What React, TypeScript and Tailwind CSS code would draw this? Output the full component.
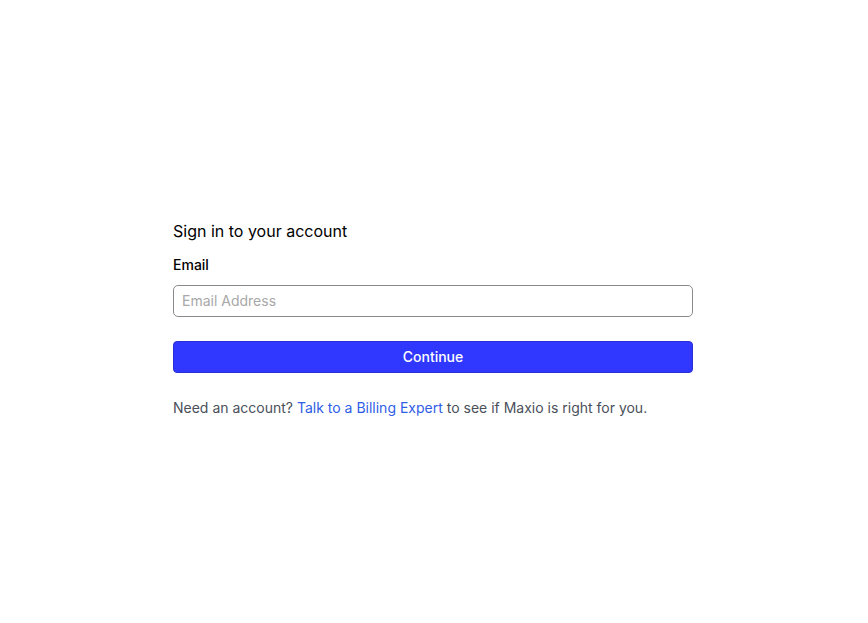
export default function App() {
  return (
    <div className="min-h-screen bg-white font-['Inter',sans-serif]">
      <div className="ml-[173px] w-[520px] pt-[219px]">
        <h1 className="text-base leading-6 font-normal text-black">Sign in to your account</h1>
        <label className="mt-3 block text-sm leading-5 font-medium text-black">Email</label>
        <input
          type="email"
          placeholder="Email Address"
          className="mt-[10px] block h-8 w-full rounded-[5px] border border-[#8a8a8a] px-2 pb-px text-sm text-black placeholder:text-[#a8a8a8] outline-none"
        />
        <button className="mt-6 flex h-8 w-full items-center justify-center rounded-[4px] border border-[#2a30d8] bg-[#3038ff] text-sm font-medium text-white">
          Continue
        </button>
        <p className="mt-[25px] text-sm leading-5 text-[#4a4f5a]">
          Need an account? <a className="text-[#2f5ee6]">Talk to a Billing Expert</a> to see if Maxio is right for you.
        </p>
      </div>
    </div>
  );
}
